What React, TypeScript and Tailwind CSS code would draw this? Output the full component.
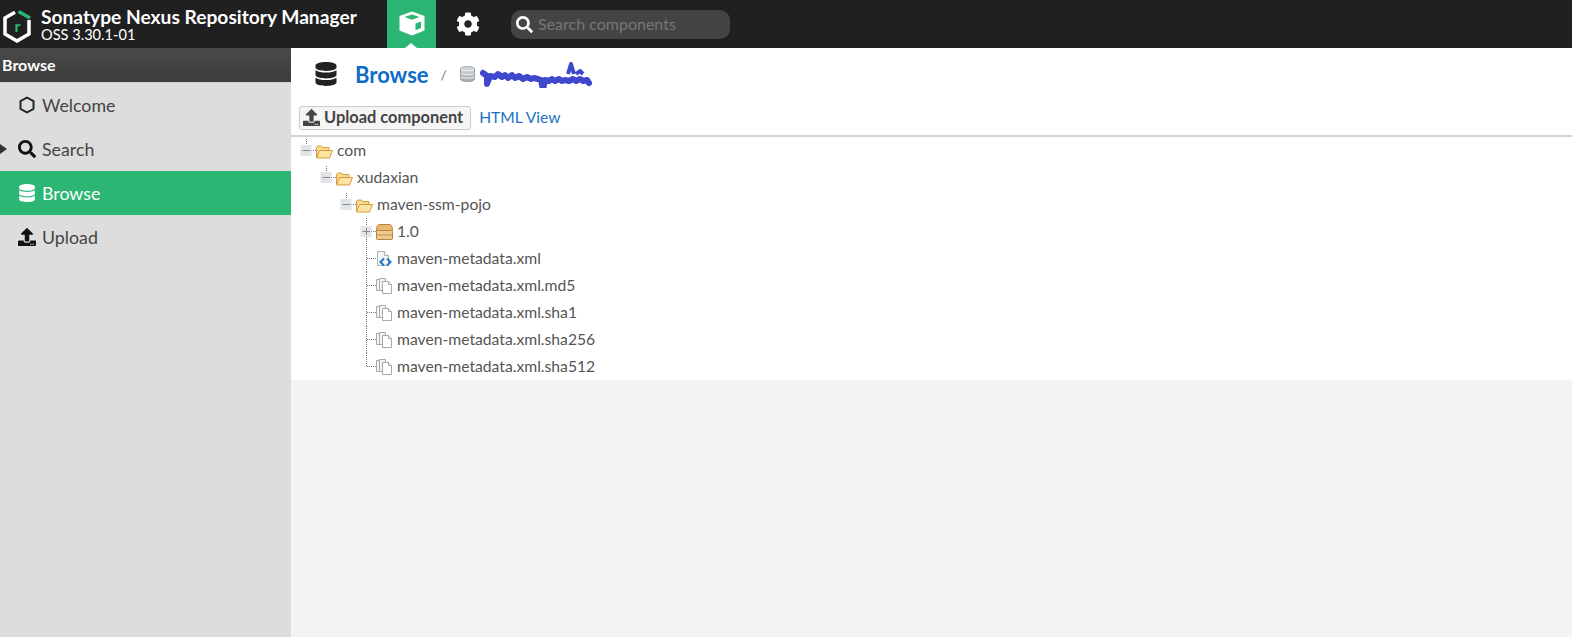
import type { ReactNode } from "react";
import { FaCog, FaDatabase, FaSearch, FaUpload } from "react-icons/fa";

const navItems = [
  { label: "Welcome", icon: <HexIcon />, active: false, arrow: false },
  { label: "Search", icon: <FaSearch className="h-[18px] w-[18px] text-[#111]" />, active: false, arrow: true },
  { label: "Browse", icon: <FaDatabase className="h-[18px] w-[18px]" />, active: true, arrow: false },
  { label: "Upload", icon: <FaUpload className="h-[18px] w-[18px] text-[#111]" />, active: false, arrow: false },
];

type Kind = "folder" | "box" | "xml" | "file";

const rows: { label: string; depth: number; kind: Kind; toggle?: "minus" | "plus"; line: "top" | "through" | "end" }[] = [
  { label: "com", depth: 0, kind: "folder", toggle: "minus", line: "top" },
  { label: "xudaxian", depth: 1, kind: "folder", toggle: "minus", line: "top" },
  { label: "maven-ssm-pojo", depth: 2, kind: "folder", toggle: "minus", line: "top" },
  { label: "1.0", depth: 3, kind: "box", toggle: "plus", line: "through" },
  { label: "maven-metadata.xml", depth: 3, kind: "xml", line: "through" },
  { label: "maven-metadata.xml.md5", depth: 3, kind: "file", line: "through" },
  { label: "maven-metadata.xml.sha1", depth: 3, kind: "file", line: "through" },
  { label: "maven-metadata.xml.sha256", depth: 3, kind: "file", line: "through" },
  { label: "maven-metadata.xml.sha512", depth: 3, kind: "file", line: "end" },
];

function HexIcon() {
  return (
    <svg width="18" height="18" viewBox="0 0 18 18" fill="none" stroke="#222" strokeWidth="2">
      <path d="M9 1.500l6.500 3.700v7.600L9 16.500l-6.500-3.700V5.200z" strokeLinejoin="round" />
    </svg>
  );
}

function Logo() {
  return (
    <svg width="30" height="34" viewBox="0 0 30 34" fill="none" className="mt-[3px] shrink-0">
      <path d="M13 3.200L3 9v16l12 7 12-7V11" stroke="#fff" strokeWidth="3.500" />
      <path d="M16.500 2.500L28 9" stroke="#2bb673" strokeWidth="3.500" />
      <text x="15.500" y="23" textAnchor="middle" fontSize="16" fontWeight="700" fill="#2bb673" fontFamily="Lato, sans-serif">
        r
      </text>
    </svg>
  );
}

function CubeIcon() {
  return (
    <svg width="26" height="25" viewBox="0 0 26 25">
      <path d="M13 .5L25.500 5v14.500L13 24.500.5 19.500V5z" fill="#fff" />
      <path d="M13 3.500L20.500 6 13 8.700 5.500 6z" fill="#2bb673" />
      <path d="M16.500 12.500l5.500-2v6.500l-5.500 2.200z" fill="#2bb673" />
    </svg>
  );
}

// the repository name is painted over in the picture
function Scribble() {
  return (
    <svg width="116" height="28" viewBox="0 0 116 28" className="ml-[5px] shrink-0">
      <path
        d="M3 13l4 3 0 8 3-8 5 1 3-3 4 3 3-2 3 3 4-3 3 3 4-2 4 3 4-2 4 2 3-1 4 1 3 1 2 10 2-10 4 1 3-2 3 2 4-2 3 2 3-1 4 1 4-2 3 2 4-2 3 2 4-1 2 3"
        fill="none"
        stroke="#3f48cc"
        strokeWidth="6"
        strokeLinejoin="round"
        strokeLinecap="round"
      />
      <path d="M88 14l3-10 3 10M96 14l4-3 3 3" fill="none" stroke="#3f48cc" strokeWidth="4" strokeLinejoin="round" />
    </svg>
  );
}

function Connector({ line, toggle }: { line: "top" | "through" | "end"; toggle?: "minus" | "plus" }) {
  const bottom = line === "through" ? 27 : 13;
  const top = line === "top" ? 2 : 0;
  return (
    <svg width="16" height="27" viewBox="0 0 16 27" className="shrink-0">
      <path d={`M6.500 ${top}V${toggle ? 8 : bottom}`} stroke="#777" strokeDasharray="1 1" />
      {line === "through" && toggle && <path d="M6.500 19V27" stroke="#777" strokeDasharray="1 1" />}
      <path d="M7 13.500H16" stroke="#777" strokeDasharray="1 1" />
      {toggle && (
        <>
          <rect x="0.500" y="8" width="11" height="11" fill="#e1e4e8" />
          <path d="M2.500 13.500H10" stroke="#8a8a8a" />
          {toggle === "plus" && <path d="M6.500 10V17" stroke="#8a8a8a" />}
        </>
      )}
    </svg>
  );
}

function TreeIcon({ kind }: { kind: Kind }) {
  if (kind === "folder") {
    return (
      <svg width="17" height="14" viewBox="0 0 17 14" className="mt-[2px] shrink-0">
        <path d="M.5 13V2.500l1-1.500h4l1 1.500h6.500V5" fill="#f8dc8e" stroke="#d99a3f" />
        <path d="M.5 13L3.500 5.500h13L13.500 13z" fill="#fce3a2" stroke="#d99a3f" strokeLinejoin="round" />
      </svg>
    );
  }
  if (kind === "box") {
    return (
      <svg width="17" height="16" viewBox="0 0 17 16" className="shrink-0">
        <path d="M.5 6.500C.5 2 2 .5 4 .5h9c2 0 3.500 1.500 3.500 6z" fill="#e9b874" stroke="#b98339" strokeLinejoin="round" />
        <rect x=".5" y="6.500" width="16" height="9" rx="1" fill="#f0c98f" stroke="#b98339" />
        <path d="M1 11h15" stroke="#c4924f" />
      </svg>
    );
  }
  if (kind === "xml") {
    return (
      <svg width="17" height="16" viewBox="0 0 17 16" className="shrink-0">
        <path d="M1.500.5h7l4 4v10h-11z" fill="#f3f4f6" stroke="#aab0b8" />
        <path d="M8.500.5v4h4" fill="#fff" stroke="#aab0b8" />
        <path d="M8 7.500L4.500 11 8 14.500M11 7.500L14.500 11 11 14.500" fill="none" stroke="#1b78c9" strokeWidth="2" />
      </svg>
    );
  }
  return (
    <svg width="17" height="16" viewBox="0 0 17 16" fill="#f5f5f5" stroke="#a8a8a8" className="shrink-0">
      <path d="M.5 1.500h6v11h-6z" />
      <path d="M3.500.5h6v12h-6z" />
      <path d="M6.500 3.500h6l3 3v9h-9z" fill="#fff" />
      <path d="M12.500 3.500v3h3" />
    </svg>
  );
}

function TreeRow({ depthClass, children }: { depthClass: string; children: ReactNode }) {
  return <div className={`flex h-[27px] items-center ${depthClass}`}>{children}</div>;
}

const depthClasses = ["pl-[9px]", "pl-[29px]", "pl-[49px]", "pl-[69px]"];

export default function App() {
  return (
    <div className="flex h-[637px] w-[1572px] flex-col overflow-hidden bg-[#f3f3f3] font-['Lato',sans-serif] text-[#444]">
      {/* header */}
      <header className="flex h-12 shrink-0 items-center bg-[#202020]">
        <div className="ml-[2px] flex w-[385px] items-center gap-[9px] text-white">
          <Logo />
          <div className="leading-none">
            <div className="text-[19.200px] font-bold leading-[20px]">Sonatype Nexus Repository Manager</div>
            <div className="text-[14.600px] leading-[15px]">OSS 3.30.1-01</div>
          </div>
        </div>
        <div className="relative flex h-12 w-[49px] items-center justify-center bg-[#2bb673] pb-[2px]">
          <CubeIcon />
          <div className="absolute bottom-0 left-[18px] h-0 w-0 border-x-[6px] border-b-[5px] border-x-transparent border-b-white" />
        </div>
        <FaCog className="ml-[20px] h-[24px] w-[24px] text-white" />
        <div className="ml-[31px] flex h-[29px] w-[219px] items-center gap-[5px] rounded-[10px] bg-[#444] pl-[5px]">
          <FaSearch className="h-[17px] w-[17px] text-white" />
          <span className="text-[16px] text-[#777]">Search components</span>
        </div>
      </header>

      <div className="flex min-h-0 flex-1">
        {/* sidebar */}
        <aside className="w-[291px] shrink-0 bg-[#dddddd]">
          <div className="flex h-[34px] items-center bg-gradient-to-b from-[#4a4a4a] to-[#3c3c3c] pl-[2px] text-[16px] font-bold text-white">
            Browse
          </div>
          <div className="h-px bg-[#cfcfcf]" />
          {navItems.map((item) => (
            <div
              key={item.label}
              className={`relative flex h-11 items-center gap-[6px] pl-[17px] text-[17.800px] ${
                item.active ? "bg-[#2bb673] text-white" : "text-[#444]"
              }`}
            >
              {item.arrow && (
                <div className="absolute left-0 top-[17px] h-0 w-0 border-y-[5px] border-l-[7px] border-y-transparent border-l-[#333]" />
              )}
              <span className="flex w-[19px] justify-center">{item.icon}</span>
              {item.label}
            </div>
          ))}
        </aside>

        {/* main */}
        <main className="min-w-0 flex-1">
          <div className="bg-white">
            <div className="flex h-[52px] items-center pl-[23px]">
              <FaDatabase className="h-[24px] w-[24px] text-[#222]" />
              <span className="ml-[17px] text-[22px] font-bold text-[#0f6cc4]">Browse</span>
              <span className="ml-[12px] text-[14px] text-[#777]">/</span>
              <svg width="15" height="16" viewBox="0 0 15 16" className="ml-[13px] shrink-0">
                <defs>
                  <linearGradient id="db" x1="0" y1="0" x2="0" y2="1">
                    <stop offset="0" stopColor="#d5dade" />
                    <stop offset="1" stopColor="#a3aab1" />
                  </linearGradient>
                </defs>
                <path d="M.5 3C.5 1.300 3.500.5 7.500.5s7 .8 7 2.500v10c0 1.700-3 2.500-7 2.500s-7-.8-7-2.500z" fill="url(#db)" stroke="#9aa1a8" />
                <path d="M1 3.500c1.500 1.500 11.500 1.500 13 0M1 7.500c1.500 1.500 11.500 1.500 13 0M1 11c1.500 1.500 11.500 1.500 13 0" fill="none" stroke="#f2f4f5" />
              </svg>
              <Scribble />
            </div>
            <div className="flex h-[37px] items-center border-b-2 border-[#d4d4d4] pl-2">
              <button className="flex h-[24px] items-center gap-[4px] rounded-[3px] border border-[#ccc] bg-[#f5f5f5] pl-[3px] pr-[7px] text-[16.400px] font-bold text-[#444]">
                <FaUpload className="h-[17px] w-[17px] text-[#444]" />
                Upload component
              </button>
              <a className="ml-[8px] text-[15.600px] text-[#1b72c4]">HTML View</a>
            </div>
            <div>
              {rows.map((row) => (
                <TreeRow key={row.label} depthClass={depthClasses[row.depth]}>
                  <Connector line={row.line} toggle={row.toggle} />
                  <TreeIcon kind={row.kind} />
                  <span className="ml-[4px] text-[15.700px] text-[#555]">{row.label}</span>
                </TreeRow>
              ))}
            </div>
          </div>
        </main>
      </div>
    </div>
  );
}
